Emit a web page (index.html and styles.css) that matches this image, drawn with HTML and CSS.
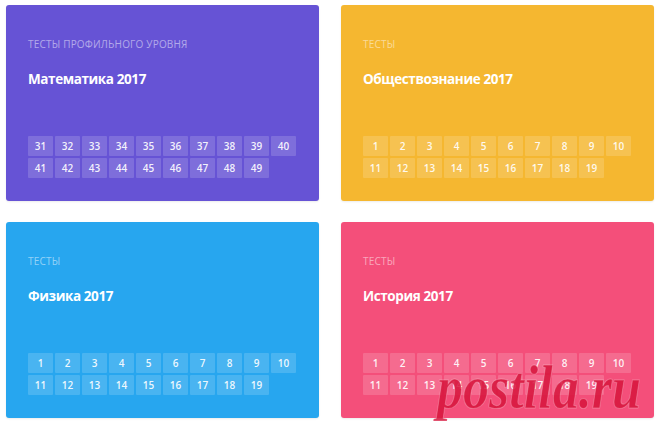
FILE: index.html
```
<!DOCTYPE html>
<html lang="ru">
<head>
<meta charset="utf-8">
<link rel="stylesheet" href="styles.css">
</head>
<body>
<div class="grid">
  <div class="card purple">
    <div class="label">Тесты профильного уровня</div>
    <div class="title">Математика 2017</div>
    <div class="tiles">
      <span>31</span><span>32</span><span>33</span><span>34</span><span>35</span><span>36</span><span>37</span><span>38</span><span>39</span><span>40</span>
      <span>41</span><span>42</span><span>43</span><span>44</span><span>45</span><span>46</span><span>47</span><span>48</span><span>49</span>
    </div>
  </div>
  <div class="card yellow">
    <div class="label">Тесты</div>
    <div class="title">Обществознание 2017</div>
    <div class="tiles">
      <span>1</span><span>2</span><span>3</span><span>4</span><span>5</span><span>6</span><span>7</span><span>8</span><span>9</span><span>10</span>
      <span>11</span><span>12</span><span>13</span><span>14</span><span>15</span><span>16</span><span>17</span><span>18</span><span>19</span>
    </div>
  </div>
  <div class="card blue">
    <div class="label">Тесты</div>
    <div class="title">Физика 2017</div>
    <div class="tiles">
      <span>1</span><span>2</span><span>3</span><span>4</span><span>5</span><span>6</span><span>7</span><span>8</span><span>9</span><span>10</span>
      <span>11</span><span>12</span><span>13</span><span>14</span><span>15</span><span>16</span><span>17</span><span>18</span><span>19</span>
    </div>
  </div>
  <div class="card pink">
    <div class="label">Тесты</div>
    <div class="title">История 2017</div>
    <div class="tiles">
      <span>1</span><span>2</span><span>3</span><span>4</span><span>5</span><span>6</span><span>7</span><span>8</span><span>9</span><span>10</span>
      <span>11</span><span>12</span><span>13</span><span>14</span><span>15</span><span>16</span><span>17</span><span>18</span><span>19</span>
    </div>
    <div class="watermark">postila.ru</div>
  </div>
</div>
</body>
</html>
```
FILE: styles.css
```
html, body {
  margin: 0;
  padding: 0;
  background: #ffffff;
}
body {
  font-family: "Open Sans", "Noto Sans", sans-serif;
  width: 660px;
  height: 423px;
  overflow: hidden;
}
.grid {
  display: grid;
  grid-template-columns: 313px 313px;
  grid-auto-rows: 196px;
  column-gap: 22px;
  row-gap: 21px;
  padding: 5px 0 0 6px;
}
.card {
  position: relative;
  border-radius: 3px;
  padding: 33px 22px 23px 22px;
  display: flex;
  flex-direction: column;
  color: #fff;
  box-shadow: 0 1px 2px rgba(0,0,0,0.08);
}
.purple { background: #6653d5; }
.yellow { background: #f5b730; }
.blue { background: #27a6ef; }
.pink { background: #f44f7a; }
.label {
  font-size: 10px;
  line-height: 12px;
  text-transform: uppercase;
  letter-spacing: 0.2px;
  color: rgba(255,255,255,0.5);
}
.title {
  margin-top: 20px;
  font-size: 13.5px;
  line-height: 18px;
  font-weight: 700;
  letter-spacing: -0.4px;
}
.tiles {
  margin-top: auto;
  display: grid;
  grid-template-columns: repeat(10, 25px);
  grid-auto-rows: 20px;
  gap: 2px;
}
.tiles span {
  background: rgba(255,255,255,0.16);
  border-radius: 1px;
  display: flex;
  align-items: center;
  justify-content: center;
  font-size: 10px;
  font-weight: 600;
  color: rgba(255,255,255,0.92);
}
.watermark {
  position: absolute;
  left: 96px;
  top: 135px;
  font-family: "Liberation Serif", serif;
  font-style: italic;
  font-weight: 700;
  font-size: 62px;
  line-height: 60px;
  color: rgba(214, 20, 60, 0.85);
  transform: scaleX(0.84);
  transform-origin: left top;
  -webkit-text-stroke: 1px rgba(255,255,255,0.25);
  pointer-events: none;
}
```
